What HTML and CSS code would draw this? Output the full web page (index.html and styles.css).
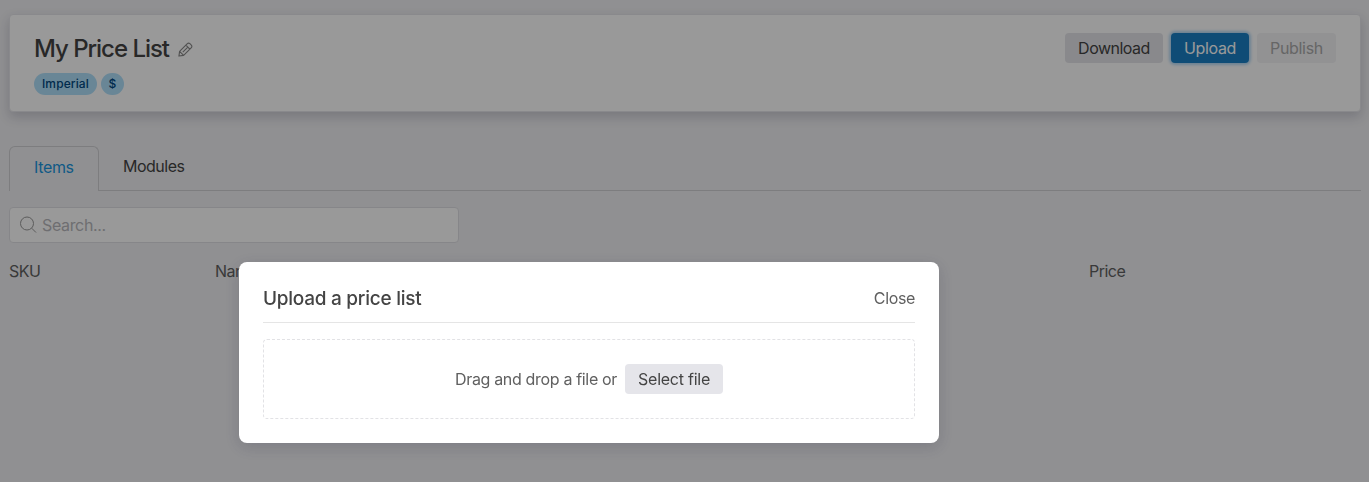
FILE: index.html
```html
<!DOCTYPE html>
<html lang="en">
<head>
  <meta charset="UTF-8">
  <title>My Price List</title>
  <link rel="stylesheet" href="styles.css">
</head>
<body>

  <div class="page">
    <header class="card">
      <div>
        <div class="title-row">
          <h1>My Price List</h1>
          <svg class="pencil" width="15" height="15" viewBox="0 0 16 16" fill="none" stroke="currentColor" stroke-width="1.2" stroke-linejoin="round">
            <path d="M1 15l.7-5 8-8c1-1 2.2-1 3-.2l1.5 1.5c.8.8.8 2-.2 3l-8 8zM8.4 3.4l4.2 4.2M10.5 5.5l-5.4 5.4M1.7 10l4.3 4.3"/>
          </svg>
        </div>
        <div class="tags">
          <span class="tag">Imperial</span>
          <span class="tag tag-currency">$</span>
        </div>
      </div>
      <div class="actions">
        <button class="btn">Download</button>
        <button class="btn btn-primary">Upload</button>
        <button class="btn btn-publish" disabled>Publish</button>
      </div>
    </header>

    <nav class="tabs">
      <a class="tab active">Items</a>
      <a class="tab">Modules</a>
    </nav>

    <div class="search">
      <svg width="17" height="18" viewBox="0 0 17 18" fill="none" stroke="currentColor">
        <circle cx="7" cy="7.5" r="6.5"/>
        <path d="M11.7 12.2l4.3 4.3"/>
      </svg>
      <input type="text" placeholder="Search...">
    </div>

    <div class="columns">
      <span>SKU</span>
      <span>Name</span>
      <span>Price</span>
    </div>
  </div>

  <div class="overlay">
    <div class="modal">
      <div class="modal-header">
        <h2>Upload a price list</h2>
        <a class="close">Close</a>
      </div>
      <div class="dropzone">
        <span class="drop-text">Drag and drop a file or</span>
        <button class="btn btn-select">Select file</button>
      </div>
    </div>
  </div>

</body>
</html>
```

FILE: styles.css
```css
* {
  box-sizing: border-box;
}

body {
  margin: 0;
  height: 482px;
  overflow: hidden;
  background-color: #f0f0f3;
  color: #606060;
  font-family: Inter, "Liberation Sans", sans-serif;
  font-size: 16px;
  line-height: 24px;
  letter-spacing: -0.5px;
}

.page {
  padding: 14px 8px 0 9px;
}

.card {
  display: flex;
  justify-content: space-between;
  height: 98px;
  padding: 18px 24px 0;
  background-color: white;
  border: 1px solid #e5e5ea;
  border-radius: 4px;
  box-shadow: 0 5px 12px rgba(40, 40, 70, 0.2);
}

.title-row {
  display: flex;
  align-items: center;
  gap: 9px;
  height: 32px;
}

h1 {
  margin: 0;
  color: #444;
  font-size: 24px;
  font-weight: 550;
  letter-spacing: -1.03px;
}

.pencil {
  color: #888;
}

.tags {
  display: flex;
  gap: 4px;
  margin-top: 8px;
}

.tag {
  height: 22px;
  padding: 0 8px;
  border-radius: 11px;
  background-color: #b0e0fb;
  color: #004880;
  font-size: 12px;
  font-weight: 500;
  line-height: 22px;
  letter-spacing: 0.1px;
}

.tag-currency {
  width: 23px;
  padding: 0;
  text-align: center;
}

.actions {
  display: flex;
  gap: 8px;
}

.btn {
  width: 98px;
  height: 30px;
  padding: 0;
  border: none;
  border-radius: 4px;
  background-color: #e5e5ea;
  color: #444;
  font: inherit;
  letter-spacing: -0.5px;
}

.btn-primary {
  width: 78px;
  background-color: #1a7fc5;
  color: white;
  letter-spacing: -0.35px;
  box-shadow: 0 0 3px 2px #b4d8f5;
}

.btn-publish {
  width: 79px;
  background-color: #f3f3f6;
  color: #aaa;
  letter-spacing: -0.3px;
}

.btn-select {
  letter-spacing: -0.25px;
}

.tabs {
  display: flex;
  height: 45px;
  margin-top: 34px;
  border-bottom: 1px solid #d0d0d4;
}

.tab {
  padding: 8px 24px 0;
  color: #444;
}

.active {
  width: 90px;
  height: 45px;
  border: 1px solid #d0d0d4;
  border-bottom: none;
  border-radius: 6px 6px 0 0;
  background-color: #f0f0f3;
  color: #1a96e0;
  letter-spacing: -0.35px;
}

.search {
  display: flex;
  align-items: center;
  gap: 3px;
  width: 450px;
  height: 36px;
  margin-top: 16px;
  padding-left: 10px;
  border: 1px solid #e0e0e5;
  border-radius: 4px;
  background-color: white;
  color: #999;
}

.search input {
  padding: 0 0 0 2px;
  border: none;
  outline: none;
  background: none;
  font: inherit;
  letter-spacing: -0.35px;
}

.search input::placeholder {
  color: #b8b8bc;
}

.columns {
  display: grid;
  grid-template-columns: 206px 874px 1fr;
  margin-top: 16px;
}

.overlay {
  position: fixed;
  inset: 0;
  background-color: rgba(0, 0, 0, 0.4);
}

.modal {
  width: 700px;
  height: 181px;
  margin: 262px 0 0 239px;
  padding: 24px;
  border-radius: 8px;
  background-color: white;
  box-shadow: 0 4px 16px rgba(40, 40, 70, 0.2);
}

.modal-header {
  display: flex;
  justify-content: space-between;
  height: 37px;
  border-bottom: 1px solid #e5e5e5;
}

h2 {
  margin: 0;
  color: #444;
  font-size: 19px;
  font-weight: 550;
  line-height: 25px;
  letter-spacing: -0.26px;
}

.close {
  letter-spacing: -0.35px;
}

.dropzone {
  display: flex;
  align-items: center;
  justify-content: center;
  gap: 8px;
  height: 80px;
  margin-top: 16px;
  border: 1px dashed #e2e2e5;
  border-radius: 4px;
}

.drop-text {
  letter-spacing: -0.33px;
}
```
